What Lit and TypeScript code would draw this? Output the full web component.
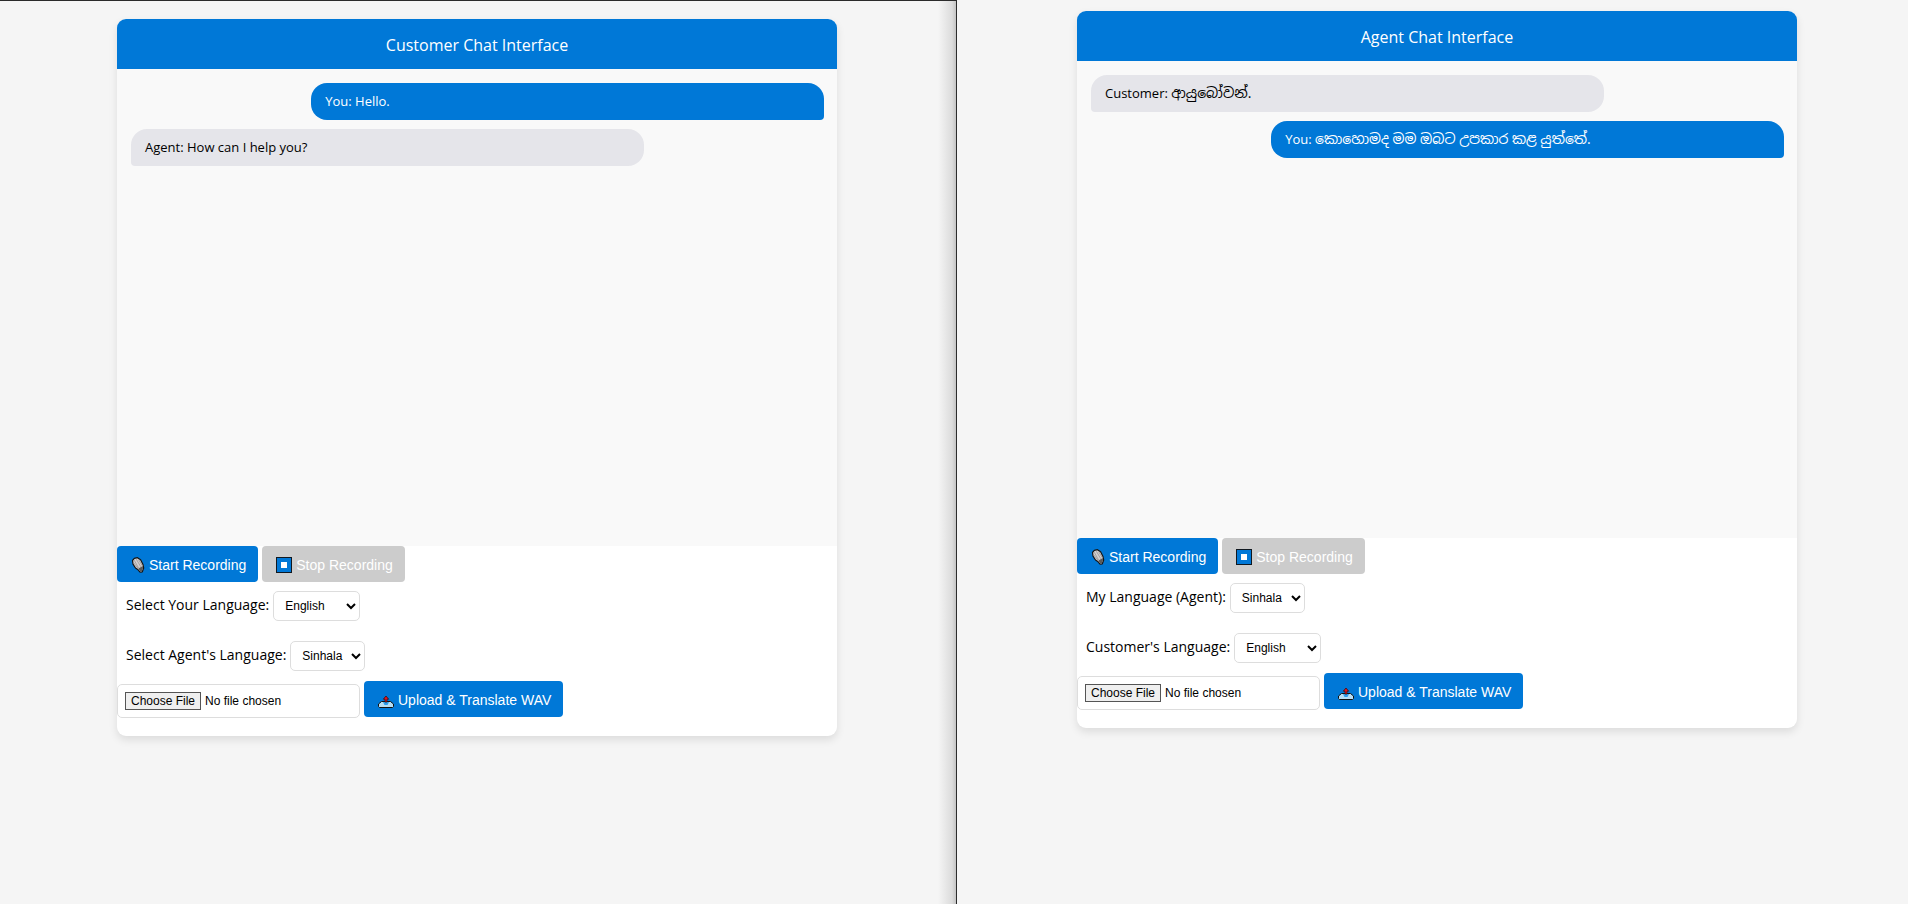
import { LitElement, html, css, svg } from "lit";
import { customElement, property } from "lit/decorators.js";

interface Message {
  from: string;
  text: string;
  own: boolean;
  lang: string;
}

interface LanguageField {
  label: string;
  value: string;
  options: string[];
}

const micIcon = svg`<svg class="icon narrow" viewBox="0 0 14 16" aria-hidden="true">
  <path d="M1.500 3.500 3.300 1.300 6.500.7 9.600 2.800 12 7.500l.7 3.500-1.400 3.800-2.200.4-2-2.400-2.600-1.800L2 7.200z" fill="#d2d0d0" stroke="#151515" stroke-width="1.200" stroke-linejoin="round"/>
  <path d="M3.200 3.200 7.600 11M5.300 2.200l4.500 7.600M7.600 2.600l3.600 6M2.800 6l4 5" stroke="#918b8b" stroke-width=".7" fill="none"/>
  <path d="M7.400 11.600 11.800 9l.2 2.200-1.200 3-1.500.2z" fill="#5a5a5a"/>
</svg>`;

const stopIcon = svg`<svg class="icon" viewBox="0 0 16 16" aria-hidden="true">
  <rect x=".5" y=".5" width="15" height="15" fill="#0078d7" stroke="#101820"/>
  <rect x="5" y="5" width="6" height="6" fill="#fff"/>
</svg>`;

const uploadIcon = svg`<svg class="icon" viewBox="0 0 16 16" aria-hidden="true">
  <path d="M3.500 9.500h9l3 2.500v2.500l-1 1h-13l-1-1V12z" fill="#b5def5" stroke="#111" stroke-linejoin="round"/>
  <path d="M5 10h6l-1.500 3h-3z" fill="#2d9bea"/>
  <path d="M8 4 5.300 7.200H7V10h2V7.200h1.700z" fill="#e5121f" stroke="#3a1010" stroke-width=".8"/>
</svg>`;

@customElement("chat-card")
class ChatCard extends LitElement {
  @property() heading = "";
  @property({ attribute: false }) messages: Message[] = [];
  @property({ attribute: false }) fields: LanguageField[] = [];

  static styles = css`
    :host {
      display: block;
      width: 100%;
      max-width: 720px;
    }
    .card {
      background: #fff;
      border-radius: 9px;
      overflow: hidden;
      box-shadow: 0 4px 9px rgba(0, 0, 0, 0.1);
      padding-bottom: 18px;
    }
    .title {
      margin: 0;
      padding: 14px 14px 12px;
      background: #0078d7;
      color: #fff;
      font-size: 16px;
      font-weight: 400;
      line-height: 24px;
      text-align: center;
    }
    .log {
      box-sizing: border-box;
      display: flex;
      flex-direction: column;
      gap: 9px;
      height: 477px;
      padding: 14px 13px 14px 14px;
      background: #f9f9f9;
      overflow-y: auto;
    }
    .message {
      box-sizing: border-box;
      width: 74%;
      padding: 9px 14px;
      border-radius: 16px 16px 16px 4px;
      background: #e5e5ea;
      color: #000;
      font-size: 13px;
      line-height: 19px;
    }
    .message:lang(si) {
      line-height: 19px;
    }
    .words:lang(si) {
      font-size: 14px;
      line-height: 16px;
    }
    .own {
      align-self: flex-end;
      border-radius: 16px 16px 4px 16px;
      background: #0078d7;
      color: #fff;
    }
    .row {
      display: flex;
      gap: 4px;
    }
    .button {
      box-sizing: border-box;
      display: flex;
      align-items: center;
      gap: 4px;
      height: 36px;
      padding: 2px 12px 0 14px;
      border: 0;
      border-radius: 4px;
      background: #0078d7;
      color: #fff;
      font-family: "Liberation Sans", Arial, sans-serif;
      font-size: 14px;
    }
    .button:disabled {
      background: #ccc;
    }
    .icon {
      width: 16px;
      height: 16px;
      flex: none;
    }
    .narrow {
      width: 14px;
    }
    .fields {
      display: grid;
      gap: 20px;
      padding: 9px 9px 10px;
    }
    .field {
      display: flex;
      align-items: center;
      gap: 4px;
      height: 30px;
    }
    .label {
      line-height: 20px;
      padding-bottom: 2px;
    }
    .select,
    .file {
      box-sizing: border-box;
      border: 1px solid #ddd;
      border-radius: 5px;
      background: #fff;
      color: #000;
      font-family: "Liberation Sans", Arial, sans-serif;
      font-size: 12px;
    }
    .select {
      height: 30px;
      padding: 0 5px 0 7px;
    }
    .file {
      width: 243px;
      height: 34px;
      margin-top: 3px;
      padding: 7px;
    }
    .file::file-selector-button {
      box-sizing: border-box;
      height: 18px;
      margin: 0 4px 0 0;
      padding: 0 5px;
      border: 1px solid #555;
      border-radius: 0;
      background: #efefef;
      color: #000;
      font-family: inherit;
      font-size: 12px;
    }
  `;

  render() {
    return html`
      <section class="card">
        <h1 class="title">${this.heading}</h1>
        <div class="log">
          ${this.messages.map(
            (m) => html`<div class="message ${m.own ? "own" : ""}">
              ${m.from}: <span class="words" lang=${m.lang}>${m.text}</span>
            </div>`
          )}
        </div>
        <div class="row">
          <button class="button" type="button">${micIcon}Start Recording</button>
          <button class="button" type="button" disabled>${stopIcon}Stop Recording</button>
        </div>
        <div class="fields">
          ${this.fields.map(
            (f, i) => html`<div class="field">
              <label class="label" for="language-${i}">${f.label}</label>
              <select class="select" id="language-${i}">
                ${f.options.map((o) => html`<option ?selected=${o === f.value}>${o}</option>`)}
              </select>
            </div>`
          )}
        </div>
        <div class="row">
          <input class="file" type="file" accept=".wav" aria-label="WAV file" />
          <button class="button" type="button">${uploadIcon}Upload &amp; Translate WAV</button>
        </div>
      </section>
    `;
  }
}

@customElement("app-root")
class AppRoot extends LitElement {
  static styles = css`
    :host {
      display: grid;
      grid-template-columns: 957fr 951fr;
      min-height: 100vh;
      background: #f5f5f5;
      font-family: "Open Sans", "Segoe UI", "Noto Sans Sinhala", sans-serif;
      font-size: 14px;
    }
    .pane {
      box-sizing: border-box;
      display: flex;
      justify-content: center;
      align-items: flex-start;
    }
    .customer {
      padding: 18px 2px 18px 0;
      border-top: 1px solid #2b2b2b;
      border-right: 1px solid #2b2b2b;
      background: linear-gradient(to left, #c4c4c4, #dcdcdc 4px, #f5f5f5 18px);
    }
    .agent {
      padding: 11px 0 11px 9px;
    }
  `;

  render() {
    const english = { value: "English", options: ["English", "Japanese"] };
    const sinhala = { value: "Sinhala", options: ["Sinhala"] };
    return html`
      <main class="pane customer">
        <chat-card
          heading="Customer Chat Interface"
          .messages=${[
            { from: "You", text: "Hello.", own: true, lang: "en" },
            { from: "Agent", text: "How can I help you?", own: false, lang: "en" },
          ]}
          .fields=${[
            { label: "Select Your Language:", ...english },
            { label: "Select Agent's Language:", ...sinhala },
          ]}
        ></chat-card>
      </main>
      <section class="pane agent">
        <chat-card
          heading="Agent Chat Interface"
          .messages=${[
            { from: "Customer", text: "ආයුබෝවන්.", own: false, lang: "si" },
            { from: "You", text: "කොහොමද මම ඔබට උපකාර කළ යුත්තේ.", own: true, lang: "si" },
          ]}
          .fields=${[
            { label: "My Language (Agent):", ...sinhala },
            { label: "Customer's Language:", ...english },
          ]}
        ></chat-card>
      </section>
    `;
  }
}
